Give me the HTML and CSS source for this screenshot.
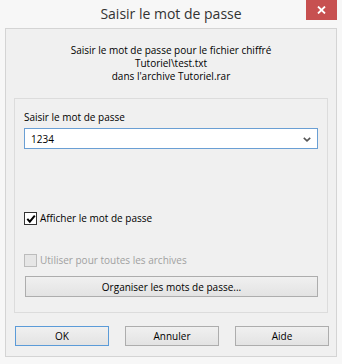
FILE: index.html
```html
<!DOCTYPE html>
<html lang="fr">

<head>
  <meta charset="utf-8" />
  <title>Saisir le mot de passe</title>
  <link rel="stylesheet" href="styles.css">
</head>

<body>
  <div class="dialog">
    <!-- barre de titre -->
    <div class="dialog_titlebar">
      <span></span>
      <span class="dialog_title">Saisir le mot de passe</span>
      <button class="dialog_close" aria-label="Fermer">
        <svg width="9" height="8" viewBox="0 0 9 8">
          <path d="M1 0.5 L8 7.5 M8 0.5 L1 7.5" stroke="#fff" stroke-width="1.8" fill="none" />
        </svg>
      </button>
    </div>

    <div class="dialog_client">
      <div class="dialog_info">
        <div>Saisir le mot de passe pour le fichier chiffré</div>
        <div>Tutoriel\test.txt</div>
        <div>dans l'archive Tutoriel.rar</div>
      </div>

      <div class="group_box">
        <div class="group_label">Saisir le mot de passe</div>
        <div class="combo">
          <span class="combo_value">1234</span>
          <svg class="combo_arrow" width="8" height="5" viewBox="0 0 8 5">
            <path d="M0.8 0.8 L4 3.8 L7.2 0.8" stroke="#555" stroke-width="1.6" fill="none" />
          </svg>
        </div>

        <label class="check_row check_first">
          <span class="check_box">
            <svg width="10" height="10" viewBox="0 0 10 10">
              <path d="M1.3 4.8 L3.8 7.6 L8.8 1.6" stroke="#000" stroke-width="2" fill="none" />
            </svg>
          </span>
          Afficher le mot de passe
        </label>

        <label class="check_row check_second disabled">
          <span class="check_box"></span>
          Utiliser pour toutes les archives
        </label>

        <button class="win_button organize">Organiser les mots de passe...</button>
      </div>

      <div class="dialog_buttons">
        <button class="win_button default">OK</button>
        <button class="win_button">Annuler</button>
        <button class="win_button">Aide</button>
      </div>
    </div>
  </div>
</body>

</html>
```

FILE: styles.css
```css
body {
  margin: 0;
  font-family: "Open Sans", "Liberation Sans", sans-serif;
  background-color: #f7f7f7;
}

.dialog {
  width: 342px;
  height: 364px;
  background-color: #f7f7f7;
  display: flex;
  flex-direction: column;
}

.dialog_titlebar {
  height: 28px;
  display: grid;
  grid-template-columns: 1fr auto 1fr;
  align-items: start;
}

.dialog_title {
  font-size: 14px;
  color: #333;
  line-height: 28px;
}

.dialog_close {
  justify-self: end;
  width: 31px;
  height: 20px;
  margin-right: 5px;
  border: 0;
  padding: 0;
  background-color: #c75050;
  display: flex;
  align-items: center;
  justify-content: center;
}

.dialog_client {
  margin: 0 5px;
  height: 327px;
  border: 1px solid #d4d4d4;
  background-color: #f0f0f0;
  font-size: 10px;
  color: #000;
}

.dialog_info {
  padding-top: 15px;
  text-align: center;
  line-height: 13px;
}

.group_box {
  margin: 15px 8px 0 8px;
  height: 213px;
  border: 1px solid #dcdcdc;
  padding: 0 9px;
}

.group_label {
  padding-top: 12px;
  line-height: 13px;
}

.combo {
  margin-top: 4px;
  height: 19px;
  border: 1px solid #6a9fd4;
  background-color: #fff;
  display: flex;
  align-items: center;
  justify-content: space-between;
  padding: 0 6px 0 6px;
}

.combo_arrow {
  margin-top: 1px;
}

.check_row {
  display: flex;
  align-items: center;
  gap: 3px;
  line-height: 13px;
  height: 13px;
}

.check_first {
  margin-top: 63px;
}

.check_second {
  margin-top: 29px;
}

.check_box {
  width: 11px;
  height: 11px;
  border: 1px solid #333;
  background-color: #fff;
  display: flex;
  align-items: center;
  justify-content: center;
}

.disabled {
  color: #a0a0a0;
}

.disabled .check_box {
  border-color: #bcbcbc;
  background-color: #e6e6e6;
}

.win_button {
  font-family: "Open Sans", "Liberation Sans", sans-serif;
  font-size: 10px;
  color: #000;
  height: 21px;
  padding: 0;
  border: 1px solid #adadad;
  background: linear-gradient(#f0f0f0, #e3e3e3);
}

.organize {
  display: block;
  width: 293px;
  margin: 9px 0 0 1px;
}

.dialog_buttons {
  display: flex;
  gap: 16px;
  padding-left: 9px;
  margin-top: 13px;
}

.dialog_buttons .win_button {
  width: 94px;
  height: 20px;
}

.default {
  border-color: #5b9bd8;
}
```
